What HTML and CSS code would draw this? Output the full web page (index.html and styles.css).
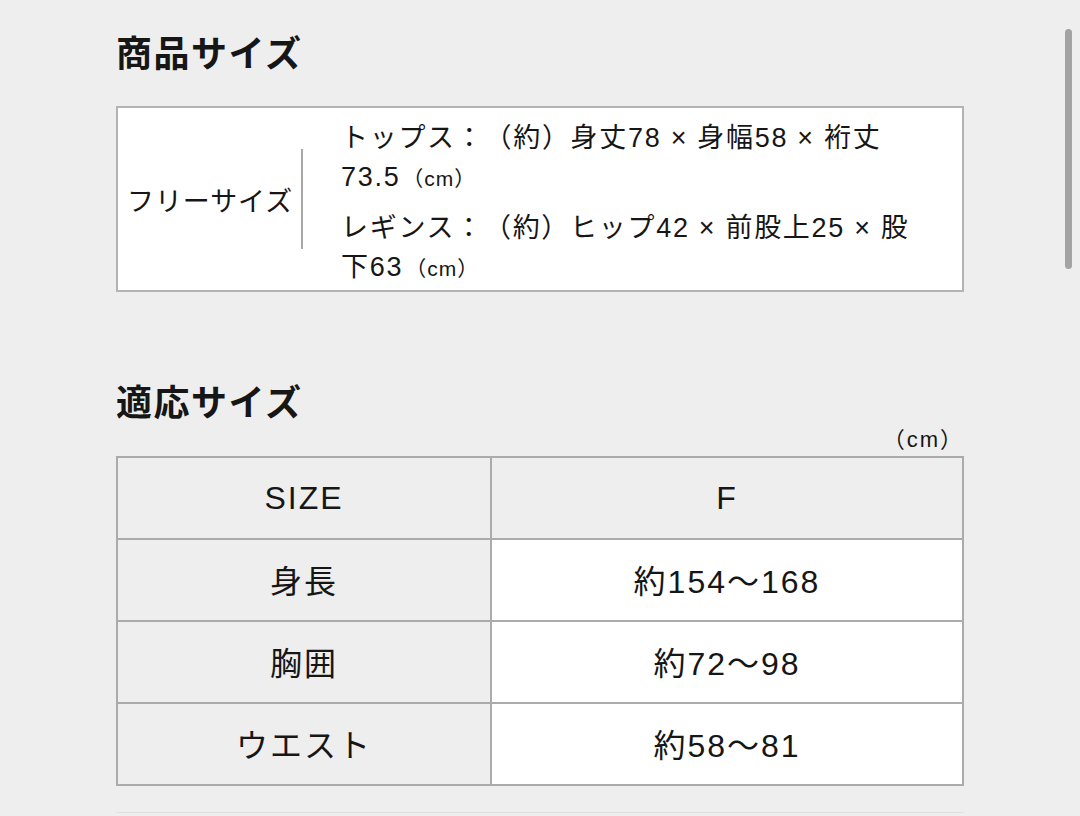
FILE: index.html
```html
<!DOCTYPE html>
<html lang="ja">
<head>
<meta charset="utf-8">
<link rel="stylesheet" href="styles.css">
</head>
<body>
<main class="page">
  <h2 class="heading heading-first">商品サイズ</h2>
  <div class="spec-box">
    <div class="spec-label"><span class="spec-label-text">フリーサイズ</span></div>
    <div class="spec-body">
      <p class="spec-line">トップス：（約）身丈78 × 身幅58 × 裄丈73.5<span class="unit">（cm）</span></p>
      <p class="spec-line">レギンス：（約）ヒップ42 × 前股上25 × 股下63<span class="unit">（cm）</span></p>
    </div>
  </div>

  <h2 class="heading heading-second">適応サイズ</h2>
  <div class="unit-note">（cm）</div>
  <table class="size-table">
    <tr class="head-row"><td class="c-left">SIZE</td><td class="c-right">F</td></tr>
    <tr><td class="c-left">身長</td><td class="c-right">約154〜168</td></tr>
    <tr><td class="c-left">胸囲</td><td class="c-right">約72〜98</td></tr>
    <tr><td class="c-left">ウエスト</td><td class="c-right">約58〜81</td></tr>
  </table>
  <div class="page-end"></div>
</main>
<div class="scrollbar"></div>
</body>
</html>
```

FILE: styles.css
```css
html, body {
  margin: 0;
  padding: 0;
  background: #eeeeee;
}
body {
  font-family: "Liberation Sans", "Noto Sans CJK JP", sans-serif;
  color: #161616;
  width: 1080px;
  height: 816px;
  overflow: hidden;
  position: relative;
  text-spacing-trim: space-all;
}
.page {
  padding: 0 116px;
}
.heading {
  margin: 0;
  font-family: "Noto Sans CJK JP", sans-serif;
  font-size: 36px;
  font-weight: 700;
  line-height: 44px;
  letter-spacing: 1.5px;
}
.heading-first {
  padding-top: 29px;
  margin-bottom: 33px;
}
.heading-second {
  margin-top: 86px;
}
.spec-box {
  display: flex;
  border: 2px solid #b3b3b3;
  background: #ffffff;
  height: 186px;
  box-sizing: border-box;
}
.spec-label {
  width: 186px;
  display: flex;
  align-items: center;
  flex: none;
}
.spec-label-text {
  display: flex;
  align-items: center;
  height: 100px;
  padding-left: 9px;
  padding-right: 8px;
  border-right: 2px solid #a8a8a8;
  font-size: 27px;
  letter-spacing: 0.9px;
  white-space: nowrap;
}
.spec-body {
  padding: 11px 40px 0 37px;
  flex: 1;
}
.spec-line {
  margin: 0;
  font-size: 27px;
  line-height: 39px;
  letter-spacing: 1.7px;
}
.spec-line + .spec-line {
  margin-top: 11px;
}
.unit {
  font-size: 21px;
  letter-spacing: 1px;
  margin-left: 2px;
}
.unit-note {
  text-align: right;
  font-size: 22px;
  line-height: 28px;
  letter-spacing: 2px;
  margin-top: 4px;
  margin-bottom: 2px;
}
.size-table {
  width: 848px;
  border-collapse: collapse;
  table-layout: fixed;
}
.size-table td {
  border: 2.5px solid #ababab;
  height: 77px;
  padding: 0 0 3px;
  text-align: center;
  font-size: 32px;
  letter-spacing: 2px;
}
.head-row td {
  height: 80px;
  padding: 0;
}
.c-left {
  width: 372px;
  background: #eeeeee;
}
.c-right {
  background: #ffffff;
}
.head-row .c-right {
  background: #eeeeee;
}
.page-end {
  margin-top: 26px;
  border-top: 1px solid #e0e0e0;
}
.scrollbar {
  position: absolute;
  left: 1065px;
  top: 29px;
  width: 7px;
  height: 240px;
  border-radius: 4px;
  background: #a3a3a3;
}
```
